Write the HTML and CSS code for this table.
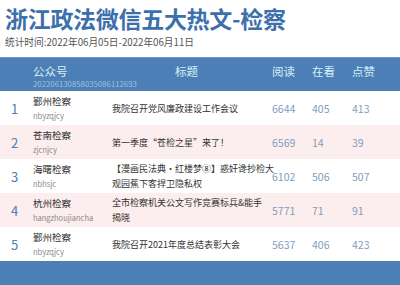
FILE: index.html
```html
<!DOCTYPE html>
<html lang="zh-CN">
<head>
    <meta charset="UTF-8">
    <title>浙江政法微信五大热文-检察</title>
    <link rel="stylesheet" href="styles.css">
</head>
<body>
<div class="top">
    <h1>浙江政法微信五大热文-检察</h1>
    <p class="date">统计时间:2022年06月05日-2022年06月11日</p>
</div>
<div class="list">
    <div class="row thead">
        <div class="rank"></div>
        <div class="name">
            <span class="cn">公众号</span>
            <span class="code">202206130858035086112693</span>
        </div>
        <div class="title">标题</div>
        <div class="num">阅读</div>
        <div class="num">在看</div>
        <div class="num">点赞</div>
    </div>
    <div class="row">
        <div class="rank">1</div>
        <div class="name"><span class="cn">鄞州检察</span><span class="py">nbyzqjcy</span></div>
        <div class="title">我院召开党风廉政建设工作会议</div>
        <div class="num">6644</div>
        <div class="num">405</div>
        <div class="num">413</div>
    </div>
    <div class="row pink">
        <div class="rank">2</div>
        <div class="name"><span class="cn">苍南检察</span><span class="py">zjcnjcy</span></div>
        <div class="title">第一季度“苍检之星”来了！</div>
        <div class="num">6569</div>
        <div class="num">14</div>
        <div class="num">39</div>
    </div>
    <div class="row">
        <div class="rank">3</div>
        <div class="name"><span class="cn">海曙检察</span><span class="py">nbhsjc</span></div>
        <div class="title">【漫画民法典·红楼梦⑧】惑奸谗抄检大观园蕉下客捍卫隐私权</div>
        <div class="num">6102</div>
        <div class="num">506</div>
        <div class="num">507</div>
    </div>
    <div class="row pink">
        <div class="rank">4</div>
        <div class="name"><span class="cn">杭州检察</span><span class="py">hangzhoujiancha</span></div>
        <div class="title">全市检察机关公文写作竞赛标兵&amp;能手<br>揭晓</div>
        <div class="num">5771</div>
        <div class="num">71</div>
        <div class="num">91</div>
    </div>
    <div class="row">
        <div class="rank">5</div>
        <div class="name"><span class="cn">鄞州检察</span><span class="py">nbyzqjcy</span></div>
        <div class="title">我院召开2021年度总结表彰大会</div>
        <div class="num">5637</div>
        <div class="num">406</div>
        <div class="num">423</div>
    </div>
</div>
<div class="foot"></div>
</body>
</html>
```

FILE: styles.css
```css
html,body{
    margin:0;
    padding:0;
}
body{
    width:400px;
    height:285px;
    overflow:hidden;
    background:#fff;
    font-family:"Noto Sans CJK SC","Noto Sans",sans-serif;
}
.top{
    height:57px;
    box-sizing:border-box;
    padding:4px 5px 0;
}
.top h1{
    margin:0;
    font-size:23px;
    line-height:28px;
    font-weight:bold;
    color:#3d70ab;
    letter-spacing:-0.3px;
}
.top .date{
    margin:3px 0 0;
    font-size:9.7px;
    line-height:14px;
    color:#555;
}
.row{
    display:grid;
    grid-template-columns:33px 79px 160px 40px 40px 48px;
    height:34px;
    align-items:center;
    background:#fff;
}
.row.pink{
    background:#fcedee;
}
.row.thead{
    background:#4c7fb6;
    border-top:1px solid #6a9bcd;
    height:33px;
    align-items:start;
}
.thead .name,
.thead .title,
.thead .num{
    padding-top:7px;
    font-size:11.5px;
    line-height:13px;
    color:#d6eff6;
}
.thead .name .cn{
    font-size:11.5px;
    line-height:13px;
    color:#d6eff6;
}
.thead .title{
    width:auto;
    padding-left:63px;
}
.thead .code{
    margin-top:2px;
    font-size:7.8px;
    line-height:8px;
    color:#9ec0e2;
    white-space:nowrap;
}
.rank{
    padding-left:11px;
    font-size:13px;
    color:#4f7fb3;
}
.name{
    display:flex;
    flex-direction:column;
}
.name .cn{
    font-size:9.5px;
    line-height:13px;
    color:#333;
}
.name .py{
    margin-top:2px;
    font-size:7.5px;
    line-height:11px;
    color:#8a8a8a;
}
.title{
    width:163px;
    font-size:9px;
    line-height:15px;
    color:#333;
}
.num{
    font-size:10.5px;
    color:#7f9dc0;
}
.foot{
    height:30px;
    background:#4c7fb6;
}
```
